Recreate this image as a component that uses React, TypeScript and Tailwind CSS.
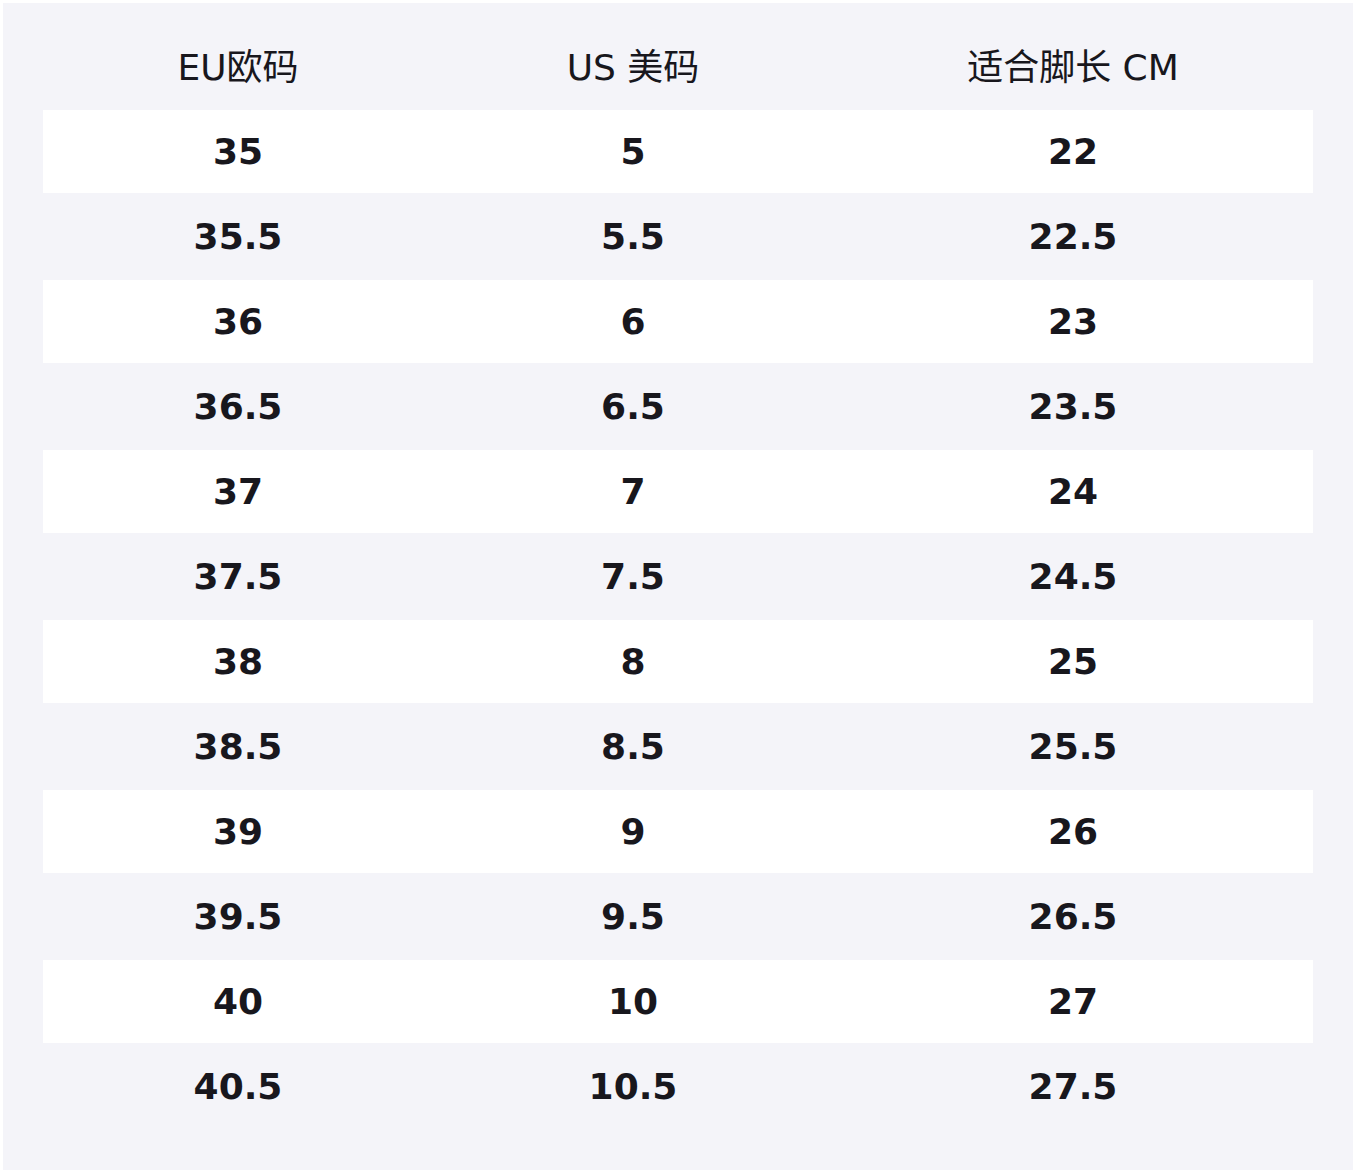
const rows: [string, string, string][] = [
    ['35', '5', '22'],
    ['35.5', '5.5', '22.5'],
    ['36', '6', '23'],
    ['36.5', '6.5', '23.5'],
    ['37', '7', '24'],
    ['37.5', '7.5', '24.5'],
    ['38', '8', '25'],
    ['38.5', '8.5', '25.5'],
    ['39', '9', '26'],
    ['39.5', '9.5', '26.5'],
    ['40', '10', '27'],
    ['40.5', '10.5', '27.5'],
];

const cols = 'grid grid-cols-[390px_400px_480px]';

export default function App() {
    return (
        <div className="bg-white p-[3px] text-[#18171d] font-['DejaVu_Sans','Noto_Sans_CJK_SC',sans-serif]">
            <div className="bg-[#f4f4f9] px-[40px] pt-[40px] pb-[42px]">
                <div className="flex flex-col gap-y-[2px]">
                    {/* Header */}
                    <div className={`${cols} h-[65px] pt-[4px] text-[36px] leading-[42px]`}>
                        <div className="text-center">EU欧码</div>
                        <div className="text-center">US 美码</div>
                        <div className="text-center">适合脚长 CM</div>
                    </div>

                    {rows.map((r, i) => (
                        <div
                            key={r[0]}
                            className={`${cols} h-[83px] items-center text-[36px] font-bold leading-[42px] ${
                                i % 2 === 0 ? 'bg-white' : ''
                            }`}
                        >
                            <div className="text-center">{r[0]}</div>
                            <div className="text-center">{r[1]}</div>
                            <div className="text-center">{r[2]}</div>
                        </div>
                    ))}
                </div>
            </div>
        </div>
    );
}
